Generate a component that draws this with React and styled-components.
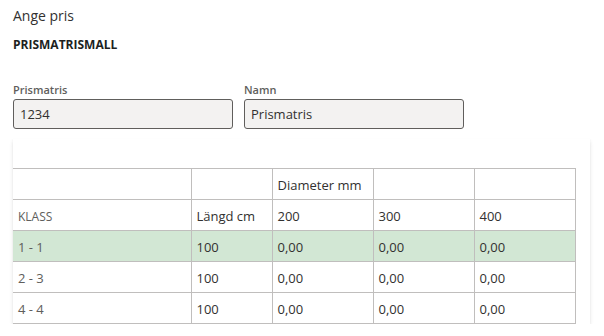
import styled, { createGlobalStyle } from "styled-components";

const GlobalStyle = createGlobalStyle`
  body {
    margin: 0;
    background: #ffffff;
    font-family: "Open Sans", "Noto Sans", sans-serif;
    color: #323130;
  }
`;

const columns = ["200", "300", "400"];

const rows = [
  { klass: "1 - 1", length: "100", values: ["0,00", "0,00", "0,00"], selected: true },
  { klass: "2 - 3", length: "100", values: ["0,00", "0,00", "0,00"] },
  { klass: "4 - 4", length: "100", values: ["0,00", "0,00", "0,00"] },
];

export default function App() {
  return (
    <>
      <GlobalStyle />
      <Page>
        <Title>Ange pris</Title>
        <Subtitle>PRISMATRISMALL</Subtitle>

        <FieldRow>
          <Field>
            <Label htmlFor="prismatris">Prismatris</Label>
            <Input id="prismatris" defaultValue="1234" readOnly />
          </Field>
          <Field>
            <Label htmlFor="namn">Namn</Label>
            <Input id="namn" defaultValue="Prismatris" readOnly />
          </Field>
        </FieldRow>

        <Card>
          <Grid>
            <colgroup>
              <col style={{ width: 178 }} />
              <col style={{ width: 81 }} />
              <col style={{ width: 101 }} />
              <col style={{ width: 101 }} />
              <col style={{ width: 101 }} />
            </colgroup>
            <thead>
              <tr>
                <Cell as="th" />
                <Cell as="th" />
                <Cell as="th">Diameter mm</Cell>
                <Cell as="th" />
                <Cell as="th" />
              </tr>
              <tr>
                <Cell as="th" $muted $small>KLASS</Cell>
                <Cell as="th">Längd cm</Cell>
                {columns.map((c) => (
                  <Cell as="th" key={c}>{c}</Cell>
                ))}
              </tr>
            </thead>
            <tbody>
              {rows.map((r) => (
                <Row key={r.klass} $selected={r.selected}>
                  <Cell $muted>{r.klass}</Cell>
                  <Cell>{r.length}</Cell>
                  {r.values.map((v, i) => (
                    <Cell key={i}>{v}</Cell>
                  ))}
                </Row>
              ))}
            </tbody>
          </Grid>
        </Card>
      </Page>
    </>
  );
}

const Page = styled.div`
  padding: 6px 14px 0 13px;
  width: 577px;
`;

const Title = styled.div`
  font-size: 14px;
  line-height: 20px;
  color: #323130;
`;

const Subtitle = styled.div`
  margin-top: 12px;
  font-size: 12px;
  line-height: 14px;
  font-weight: 700;
  color: #201f1e;
`;

const FieldRow = styled.div`
  display: flex;
  gap: 11px;
  margin-top: 31px;
`;

const Field = styled.div`
  display: flex;
  flex-direction: column;
  width: 220px;
`;

const Label = styled.label`
  font-size: 11px;
  line-height: 14px;
  font-weight: 600;
  color: #605e5c;
  margin-bottom: 2px;
`;

const Input = styled.input`
  box-sizing: border-box;
  height: 30px;
  width: 100%;
  padding: 0 6px;
  border: 1px solid #605e5c;
  border-radius: 3px;
  background: #f3f2f1;
  font-family: inherit;
  font-size: 13px;
  color: #323130;
  outline: none;
`;

const Card = styled.div`
  margin-top: 10px;
  width: 577px;
  padding: 29px 15px 0 0;
  box-sizing: border-box;
  background: #ffffff;
  box-shadow: 0 1.6px 3.6px rgba(0, 0, 0, 0.13), 0 0.3px 0.9px rgba(0, 0, 0, 0.11);
`;

const Grid = styled.table`
  width: 562px;
  border-collapse: collapse;
  table-layout: fixed;
  border: 1px solid #c0bebd;
  border-left: none;
`;

const Row = styled.tr`
  background: ${(p) => (p.$selected ? "#d2e7d4" : "transparent")};
`;

const Cell = styled.td`
  height: 31px;
  padding: 2px 5px 0;
  box-sizing: border-box;
  border: 1px solid #c0bebd;
  text-align: left;
  vertical-align: middle;
  font-weight: 400;
  font-size: ${(p) => (p.$small ? "12px" : "13px")};
  color: ${(p) => (p.$muted ? "#605e5c" : "#323130")};
  white-space: nowrap;
  &:first-child {
    border-left: none;
  }
`;
